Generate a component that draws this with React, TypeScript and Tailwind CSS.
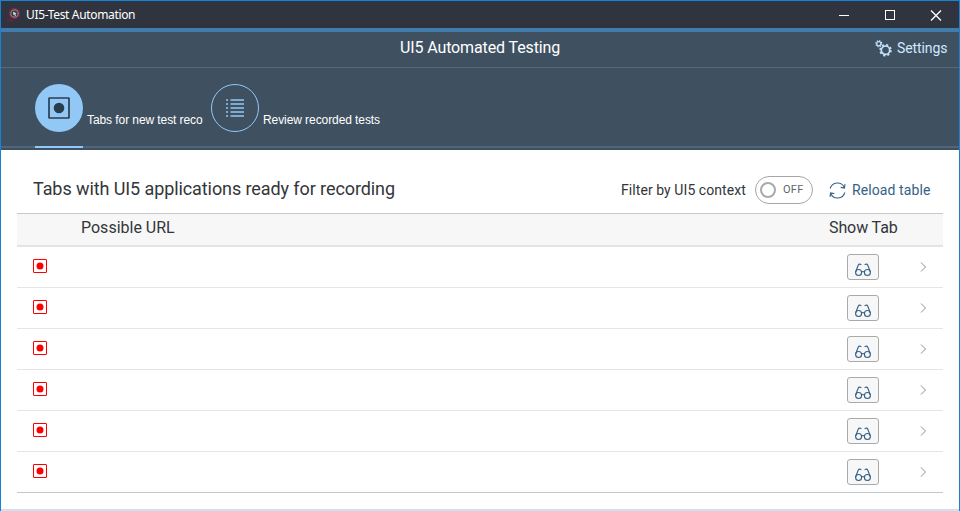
import React from "react";

function Record({ className, dot }: { className: string; dot: number }) {
  return (
    <svg viewBox="0 0 14 14" className={className} fill="none">
      <rect x="0.5" y="0.5" width="13" height="13" rx="0.3" stroke="currentColor" strokeWidth="1" />
      <circle cx="7" cy="7" r={dot} fill="currentColor" />
    </svg>
  );
}

function Glasses() {
  return (
    <svg viewBox="0 0 16 14" className="mt-[5px] h-[14px] w-4" fill="none" stroke="#346187" strokeWidth="1.1">
      <circle cx="3.6" cy="9.5" r="3" />
      <circle cx="12.4" cy="9.5" r="3" />
      <path d="M6.5 9Q8 8 9.5 9M.7 8.8L3.2 2.2Q3.7 1 4.8 1.1L6.4 1.8M15.3 8.8L12.8 2.2Q12.3 1 11.2 1.1L9.6 1.8" />
    </svg>
  );
}

function Gears() {
  return (
    <svg viewBox="0 0 17 17" className="h-[17px] w-[17px]" fill="none" stroke="#c5e2fb">
      <circle cx="10.5" cy="10.2" r="4.2" strokeWidth="1.7" />
      <circle cx="10.5" cy="10.2" r="5.4" strokeWidth="1.7" strokeDasharray="2.1 2.14" />
      <circle cx="3.8" cy="3.7" r="2.1" strokeWidth="1.3" />
      <circle cx="3.8" cy="3.7" r="3" strokeWidth="1.2" strokeDasharray="1.2 1.156" />
    </svg>
  );
}

function Refresh() {
  return (
    <svg viewBox="0 0 17 17" className="h-[17px] w-[17px]" fill="none" stroke="#346187" strokeWidth="1.1">
      <path d="M1.2 6.5A7.5 7.5 0 0 1 15.3 5.5M16 2.2L15.4 6L11.7 5.4M15.8 10.5A7.5 7.5 0 0 1 1.7 11.5M1 14.8L1.6 11L5.3 11.6" />
    </svg>
  );
}

export default function App() {
  return (
    <div className="flex h-[511px] w-[960px] flex-col overflow-hidden border-x border-t border-[#1683d8] bg-white font-['Roboto',sans-serif] text-[#32363a]">
      <div className="flex h-[27px] shrink-0 items-center bg-[#2f343f] pl-[5px] font-['Noto_Sans',sans-serif] text-white">
        <svg viewBox="0 0 16 16" className="h-4 w-4" fill="none">
          <path d="M1 12.5l3-2M1.5 14l4-1.5M5 14l3-1" stroke="#76203f" strokeWidth="1.5" strokeDasharray="1.5 1" />
          <circle cx="8.5" cy="6.5" r="5.1" fill="#34383e" stroke="#9d1642" strokeWidth="1.1" />
          <circle cx="8.5" cy="6.5" r="3.7" stroke="#7b8583" strokeWidth="1.3" />
          <path d="M7 4.8l3.5 1.4-1.2.7.8 1.5-1 .6-.8-1.5-.8.8z" fill="#ddd" />
        </svg>
        <span className="mt-px ml-1 whitespace-nowrap text-[12px] tracking-[-0.34px]">UI5-Test Automation</span>
        <svg viewBox="0 0 104 12" className="mr-[17px] ml-auto h-3 w-[104px]" fill="none" stroke="#fff" strokeWidth="1">
          <path d="M1 6.5h10" />
          <path d="M93 1.5l10 10M103 1.5l-10 10" strokeWidth="1.3" />
          <rect x="47.5" y="1.5" width="9" height="9" />
        </svg>
      </div>
      <div className="h-1 shrink-0 bg-[#427cac]" />
      <header className="grid h-9 shrink-0 grid-cols-[1fr_160px_1fr] items-center border-b border-[#55697b] bg-[#3f5161] pb-[3px]">
        <span />
        <h1 className="whitespace-nowrap text-[16px] tracking-[-0.12px] text-white">UI5 Automated Testing</h1>
        <div className="flex items-center justify-end pr-[12px] text-[#d1e8ff]">
          <Gears />
          <span className="mt-px ml-[5px] w-[50px] whitespace-nowrap text-[14px] tracking-[-0.1px]">Settings</span>
        </div>
      </header>
      <nav className="h-[82px] shrink-0 bg-[#3f5161] font-['Liberation_Sans',sans-serif] text-[12px] tracking-[-0.08px] text-white">
        <div className="flex h-20 border-b-2 border-[#4f657c] pt-4 pl-[34px]">
          <div className="relative flex h-12 w-12 items-center justify-center rounded-full bg-[#91c8f6] text-[#2b3c4d]">
            <svg viewBox="0 0 22 22" className="h-[22px] w-[22px]" fill="none">
              <rect x="1" y="1" width="20" height="20" rx=".5" stroke="currentColor" strokeWidth="1.7" />
              <circle cx="11" cy="11" r="5.3" fill="currentColor" />
            </svg>
            <div className="absolute top-[62px] left-0 h-[2px] w-12 bg-[#91c8f6]" />
          </div>
          <span className="mt-[27px] ml-1 w-[124px] whitespace-nowrap">Tabs for new test reco</span>
          <div className="flex h-12 w-12 items-center justify-center rounded-full border border-[#91c8f6]">
            <svg viewBox="0 0 18 18" className="h-[18px] w-[18px]" stroke="#91c8f6" strokeWidth="1.6">
              <path d="M0 1h2M0 5h2M0 9h2M0 13h2M0 17h2M4.5 1H18M4.5 5H18M4.5 9H18M4.5 13H18M4.5 17H18" />
            </svg>
          </div>
          <span className="mt-[27px] ml-1 whitespace-nowrap">Review recorded tests</span>
        </div>
      </nav>
      <main className="flex flex-1 flex-col px-4">
        <div className="flex h-[63px] shrink-0 items-center pt-[17px] pr-3 pl-4">
          <h2 className="mb-[3px] w-[588px] whitespace-nowrap text-[18px] tracking-[-0.09px]">Tabs with UI5 applications ready for recording</h2>
          <span className="mt-px w-[134px] whitespace-nowrap text-[14px] tracking-[0.07px]">Filter by UI5 context</span>
          <div className="flex h-[28px] w-[58px] shrink-0 items-center rounded-full border border-[#a6a6a6] pl-1 text-[11px] text-[#606468]">
            <div className="h-4 w-4 rounded-full border-2 border-[#aaa]" />
            <span className="mt-px ml-[7px] tracking-[0.3px]">OFF</span>
          </div>
          <div className="ml-4 flex shrink-0 items-center text-[#346187]">
            <Refresh />
            <span className="mt-px ml-[6px] whitespace-nowrap text-[14px] tracking-[0.1px]">Reload table</span>
          </div>
        </div>
        <div className="flex h-[34px] shrink-0 justify-between border-t border-b-2 border-t-[#c8caca] border-b-[#e4e4e4] bg-[#f7f7f7] pr-[46px] pl-16 text-[16px] leading-[28px]">
          <span>Possible URL</span>
          <span className="w-[68px] whitespace-nowrap tracking-[-0.1px]">Show Tab</span>
        </div>
        {[0, 1, 2, 3, 4, 5].map((row) => (
          <div key={row} className="flex h-[41px] shrink-0 items-center border-b border-[#e5e5e5] pr-4 pl-4 last:border-[#c5c7c8]">
            <Record className="mb-[2px] h-[14px] w-[14px] text-[#f00]" dot={3.5} />
            <div className="ml-auto flex h-[26px] w-8 items-center justify-center rounded-[3px] border border-[#aaa] bg-[#f7f7f7]">
              <Glasses />
            </div>
            <svg viewBox="0 0 7 10" className="ml-[41px] h-[10px] w-[7px]" fill="none" stroke="#8b9095">
              <path d="M1 .5L5.5 5L1 9.5" />
            </svg>
          </div>
        ))}
      </main>
      <div className="h-[2px] shrink-0 bg-[#d1e0ee]" />
    </div>
  );
}
